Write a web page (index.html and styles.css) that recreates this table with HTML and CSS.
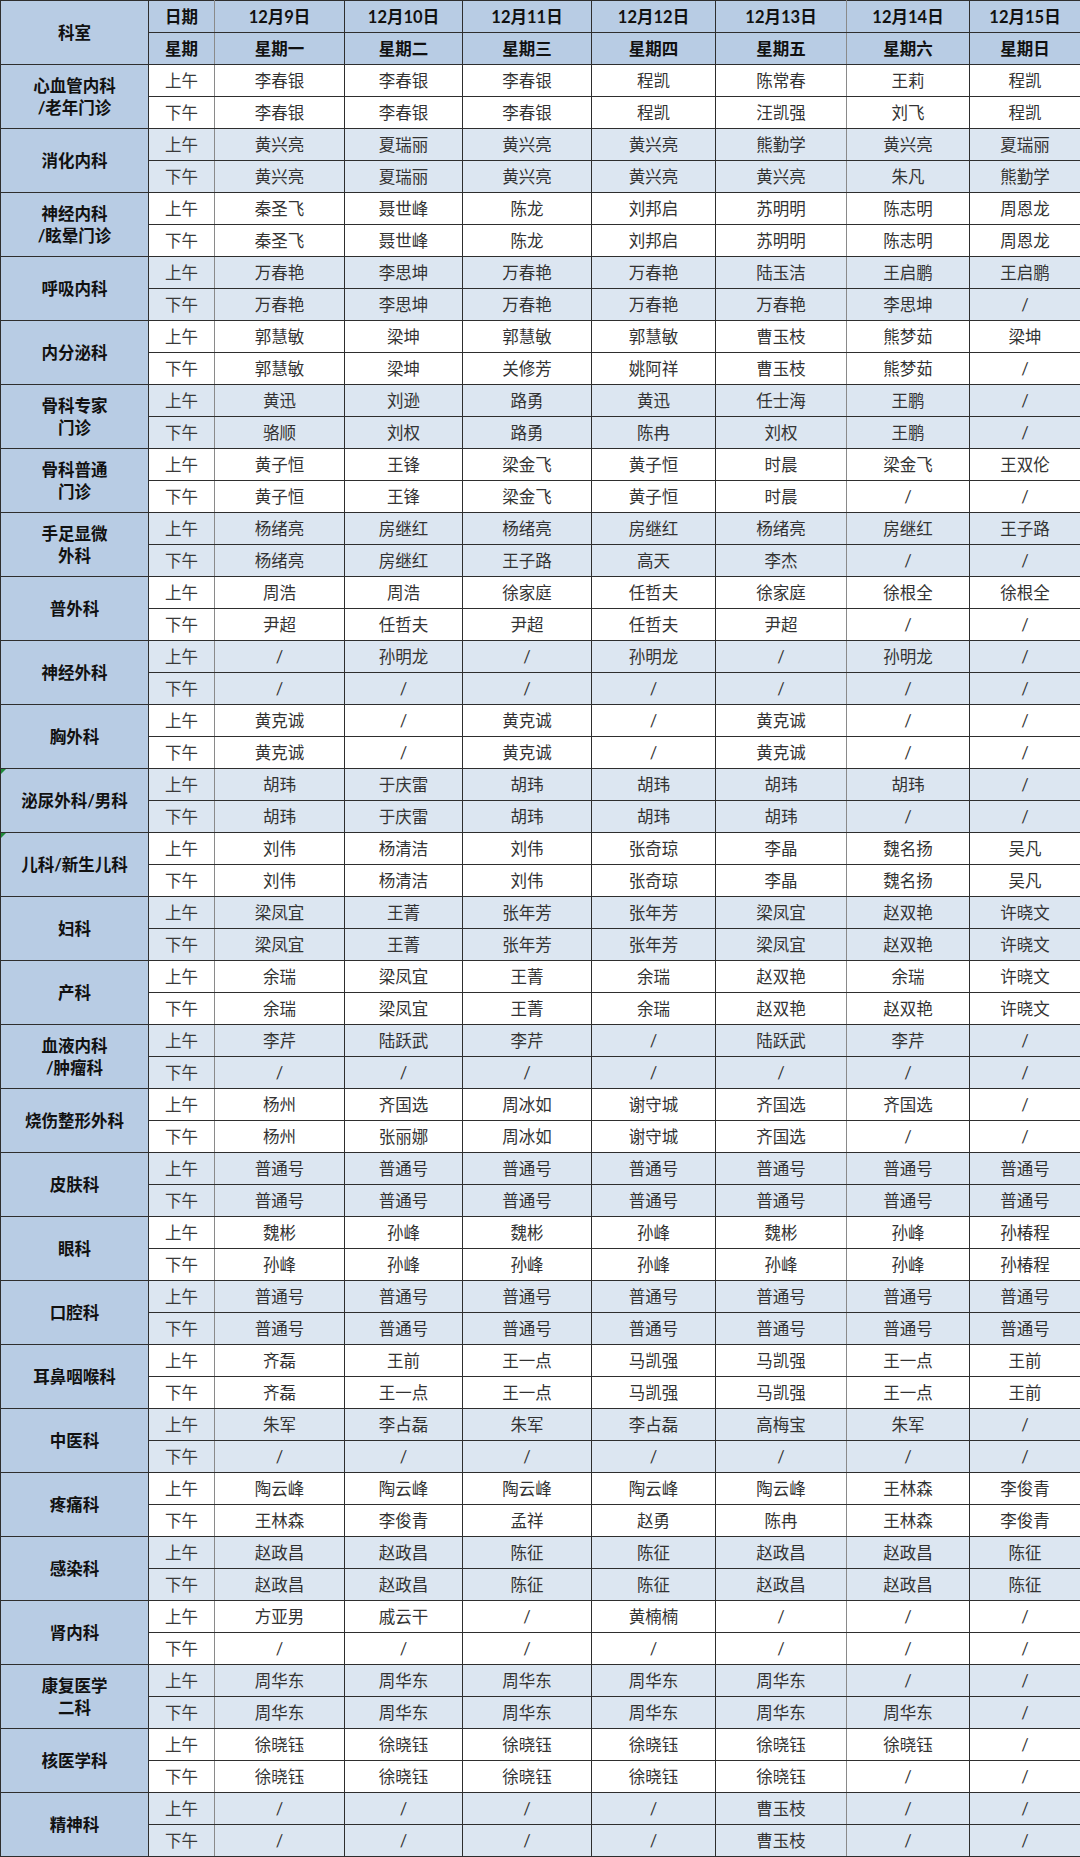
FILE: index.html
```html
<!DOCTYPE html>
<html lang="zh-CN">
<head>
<meta charset="utf-8">
<title>门诊排班表</title>
<link rel="stylesheet" href="styles.css">
</head>
<body>
<table class="sched">
<colgroup>
<col class="c-dept"><col class="c-time"><col class="c-d1"><col class="c-d2"><col class="c-d3"><col class="c-d4"><col class="c-d5"><col class="c-d6"><col class="c-d7">
</colgroup>
<thead>
<tr><th class="hd" rowspan="2">科室</th><th class="hd">日期</th><th class="hd">12月9日</th><th class="hd">12月10日</th><th class="hd">12月11日</th><th class="hd">12月12日</th><th class="hd">12月13日</th><th class="hd">12月14日</th><th class="hd">12月15日</th></tr>
<tr><th class="hd">星期</th><th class="hd">星期一</th><th class="hd">星期二</th><th class="hd">星期三</th><th class="hd">星期四</th><th class="hd">星期五</th><th class="hd">星期六</th><th class="hd">星期日</th></tr>
</thead>
<tbody>
<tr class="w"><th class="dept" rowspan="2">心血管内科<br>/老年门诊</th><td class="t">上午</td><td>李春银</td><td>李春银</td><td>李春银</td><td>程凯</td><td>陈常春</td><td>王莉</td><td>程凯</td></tr>
<tr class="w"><td class="t">下午</td><td>李春银</td><td>李春银</td><td>李春银</td><td>程凯</td><td>汪凯强</td><td>刘飞</td><td>程凯</td></tr>
<tr class="b"><th class="dept" rowspan="2">消化内科</th><td class="t">上午</td><td>黄兴亮</td><td>夏瑞丽</td><td>黄兴亮</td><td>黄兴亮</td><td>熊勤学</td><td>黄兴亮</td><td>夏瑞丽</td></tr>
<tr class="b"><td class="t">下午</td><td>黄兴亮</td><td>夏瑞丽</td><td>黄兴亮</td><td>黄兴亮</td><td>黄兴亮</td><td>朱凡</td><td>熊勤学</td></tr>
<tr class="w"><th class="dept" rowspan="2">神经内科<br>/眩晕门诊</th><td class="t">上午</td><td>秦圣飞</td><td>聂世峰</td><td>陈龙</td><td>刘邦启</td><td>苏明明</td><td>陈志明</td><td>周恩龙</td></tr>
<tr class="w"><td class="t">下午</td><td>秦圣飞</td><td>聂世峰</td><td>陈龙</td><td>刘邦启</td><td>苏明明</td><td>陈志明</td><td>周恩龙</td></tr>
<tr class="b"><th class="dept" rowspan="2">呼吸内科</th><td class="t">上午</td><td>万春艳</td><td>李思坤</td><td>万春艳</td><td>万春艳</td><td>陆玉洁</td><td>王启鹏</td><td>王启鹏</td></tr>
<tr class="b"><td class="t">下午</td><td>万春艳</td><td>李思坤</td><td>万春艳</td><td>万春艳</td><td>万春艳</td><td>李思坤</td><td>/</td></tr>
<tr class="w"><th class="dept" rowspan="2">内分泌科</th><td class="t">上午</td><td>郭慧敏</td><td>梁坤</td><td>郭慧敏</td><td>郭慧敏</td><td>曹玉枝</td><td>熊梦茹</td><td>梁坤</td></tr>
<tr class="w"><td class="t">下午</td><td>郭慧敏</td><td>梁坤</td><td>关修芳</td><td>姚阿祥</td><td>曹玉枝</td><td>熊梦茹</td><td>/</td></tr>
<tr class="b"><th class="dept" rowspan="2">骨科专家<br>门诊</th><td class="t">上午</td><td>黄迅</td><td>刘逊</td><td>路勇</td><td>黄迅</td><td>任士海</td><td>王鹏</td><td>/</td></tr>
<tr class="b"><td class="t">下午</td><td>骆顺</td><td>刘权</td><td>路勇</td><td>陈冉</td><td>刘权</td><td>王鹏</td><td>/</td></tr>
<tr class="w"><th class="dept" rowspan="2">骨科普通<br>门诊</th><td class="t">上午</td><td>黄子恒</td><td>王锋</td><td>梁金飞</td><td>黄子恒</td><td>时晨</td><td>梁金飞</td><td>王双伦</td></tr>
<tr class="w"><td class="t">下午</td><td>黄子恒</td><td>王锋</td><td>梁金飞</td><td>黄子恒</td><td>时晨</td><td>/</td><td>/</td></tr>
<tr class="b"><th class="dept" rowspan="2">手足显微<br>外科</th><td class="t">上午</td><td>杨绪亮</td><td>房继红</td><td>杨绪亮</td><td>房继红</td><td>杨绪亮</td><td>房继红</td><td>王子路</td></tr>
<tr class="b"><td class="t">下午</td><td>杨绪亮</td><td>房继红</td><td>王子路</td><td>高天</td><td>李杰</td><td>/</td><td>/</td></tr>
<tr class="w"><th class="dept" rowspan="2">普外科</th><td class="t">上午</td><td>周浩</td><td>周浩</td><td>徐家庭</td><td>任哲夫</td><td>徐家庭</td><td>徐根全</td><td>徐根全</td></tr>
<tr class="w"><td class="t">下午</td><td>尹超</td><td>任哲夫</td><td>尹超</td><td>任哲夫</td><td>尹超</td><td>/</td><td>/</td></tr>
<tr class="b"><th class="dept" rowspan="2">神经外科</th><td class="t">上午</td><td>/</td><td>孙明龙</td><td>/</td><td>孙明龙</td><td>/</td><td>孙明龙</td><td>/</td></tr>
<tr class="b"><td class="t">下午</td><td>/</td><td>/</td><td>/</td><td>/</td><td>/</td><td>/</td><td>/</td></tr>
<tr class="w"><th class="dept" rowspan="2">胸外科</th><td class="t">上午</td><td>黄克诚</td><td>/</td><td>黄克诚</td><td>/</td><td>黄克诚</td><td>/</td><td>/</td></tr>
<tr class="w"><td class="t">下午</td><td>黄克诚</td><td>/</td><td>黄克诚</td><td>/</td><td>黄克诚</td><td>/</td><td>/</td></tr>
<tr class="b"><th class="dept flag" rowspan="2">泌尿外科/男科</th><td class="t">上午</td><td>胡玮</td><td>于庆雷</td><td>胡玮</td><td>胡玮</td><td>胡玮</td><td>胡玮</td><td>/</td></tr>
<tr class="b"><td class="t">下午</td><td>胡玮</td><td>于庆雷</td><td>胡玮</td><td>胡玮</td><td>胡玮</td><td>/</td><td>/</td></tr>
<tr class="w"><th class="dept flag" rowspan="2">儿科/新生儿科</th><td class="t">上午</td><td>刘伟</td><td>杨清洁</td><td>刘伟</td><td>张奇琼</td><td>李晶</td><td>魏名扬</td><td>吴凡</td></tr>
<tr class="w"><td class="t">下午</td><td>刘伟</td><td>杨清洁</td><td>刘伟</td><td>张奇琼</td><td>李晶</td><td>魏名扬</td><td>吴凡</td></tr>
<tr class="b"><th class="dept" rowspan="2">妇科</th><td class="t">上午</td><td>梁凤宜</td><td>王菁</td><td>张年芳</td><td>张年芳</td><td>梁凤宜</td><td>赵双艳</td><td>许晓文</td></tr>
<tr class="b"><td class="t">下午</td><td>梁凤宜</td><td>王菁</td><td>张年芳</td><td>张年芳</td><td>梁凤宜</td><td>赵双艳</td><td>许晓文</td></tr>
<tr class="w"><th class="dept" rowspan="2">产科</th><td class="t">上午</td><td>余瑞</td><td>梁凤宜</td><td>王菁</td><td>余瑞</td><td>赵双艳</td><td>余瑞</td><td>许晓文</td></tr>
<tr class="w"><td class="t">下午</td><td>余瑞</td><td>梁凤宜</td><td>王菁</td><td>余瑞</td><td>赵双艳</td><td>赵双艳</td><td>许晓文</td></tr>
<tr class="b"><th class="dept" rowspan="2">血液内科<br>/肿瘤科</th><td class="t">上午</td><td>李芹</td><td>陆跃武</td><td>李芹</td><td>/</td><td>陆跃武</td><td>李芹</td><td>/</td></tr>
<tr class="b"><td class="t">下午</td><td>/</td><td>/</td><td>/</td><td>/</td><td>/</td><td>/</td><td>/</td></tr>
<tr class="w"><th class="dept" rowspan="2">烧伤整形外科</th><td class="t">上午</td><td>杨州</td><td>齐国选</td><td>周冰如</td><td>谢守城</td><td>齐国选</td><td>齐国选</td><td>/</td></tr>
<tr class="w"><td class="t">下午</td><td>杨州</td><td>张丽娜</td><td>周冰如</td><td>谢守城</td><td>齐国选</td><td>/</td><td>/</td></tr>
<tr class="b"><th class="dept" rowspan="2">皮肤科</th><td class="t">上午</td><td>普通号</td><td>普通号</td><td>普通号</td><td>普通号</td><td>普通号</td><td>普通号</td><td>普通号</td></tr>
<tr class="b"><td class="t">下午</td><td>普通号</td><td>普通号</td><td>普通号</td><td>普通号</td><td>普通号</td><td>普通号</td><td>普通号</td></tr>
<tr class="w"><th class="dept" rowspan="2">眼科</th><td class="t">上午</td><td>魏彬</td><td>孙峰</td><td>魏彬</td><td>孙峰</td><td>魏彬</td><td>孙峰</td><td>孙椿程</td></tr>
<tr class="w"><td class="t">下午</td><td>孙峰</td><td>孙峰</td><td>孙峰</td><td>孙峰</td><td>孙峰</td><td>孙峰</td><td>孙椿程</td></tr>
<tr class="b"><th class="dept" rowspan="2">口腔科</th><td class="t">上午</td><td>普通号</td><td>普通号</td><td>普通号</td><td>普通号</td><td>普通号</td><td>普通号</td><td>普通号</td></tr>
<tr class="b"><td class="t">下午</td><td>普通号</td><td>普通号</td><td>普通号</td><td>普通号</td><td>普通号</td><td>普通号</td><td>普通号</td></tr>
<tr class="w"><th class="dept" rowspan="2">耳鼻咽喉科</th><td class="t">上午</td><td>齐磊</td><td>王前</td><td>王一点</td><td>马凯强</td><td>马凯强</td><td>王一点</td><td>王前</td></tr>
<tr class="w"><td class="t">下午</td><td>齐磊</td><td>王一点</td><td>王一点</td><td>马凯强</td><td>马凯强</td><td>王一点</td><td>王前</td></tr>
<tr class="b"><th class="dept" rowspan="2">中医科</th><td class="t">上午</td><td>朱军</td><td>李占磊</td><td>朱军</td><td>李占磊</td><td>高梅宝</td><td>朱军</td><td>/</td></tr>
<tr class="b"><td class="t">下午</td><td>/</td><td>/</td><td>/</td><td>/</td><td>/</td><td>/</td><td>/</td></tr>
<tr class="w"><th class="dept" rowspan="2">疼痛科</th><td class="t">上午</td><td>陶云峰</td><td>陶云峰</td><td>陶云峰</td><td>陶云峰</td><td>陶云峰</td><td>王林森</td><td>李俊青</td></tr>
<tr class="w"><td class="t">下午</td><td>王林森</td><td>李俊青</td><td>孟祥</td><td>赵勇</td><td>陈冉</td><td>王林森</td><td>李俊青</td></tr>
<tr class="b"><th class="dept" rowspan="2">感染科</th><td class="t">上午</td><td>赵政昌</td><td>赵政昌</td><td>陈征</td><td>陈征</td><td>赵政昌</td><td>赵政昌</td><td>陈征</td></tr>
<tr class="b"><td class="t">下午</td><td>赵政昌</td><td>赵政昌</td><td>陈征</td><td>陈征</td><td>赵政昌</td><td>赵政昌</td><td>陈征</td></tr>
<tr class="w"><th class="dept" rowspan="2">肾内科</th><td class="t">上午</td><td>方亚男</td><td>戚云干</td><td>/</td><td>黄楠楠</td><td>/</td><td>/</td><td>/</td></tr>
<tr class="w"><td class="t">下午</td><td>/</td><td>/</td><td>/</td><td>/</td><td>/</td><td>/</td><td>/</td></tr>
<tr class="b"><th class="dept" rowspan="2">康复医学<br>二科</th><td class="t">上午</td><td>周华东</td><td>周华东</td><td>周华东</td><td>周华东</td><td>周华东</td><td>/</td><td>/</td></tr>
<tr class="b"><td class="t">下午</td><td>周华东</td><td>周华东</td><td>周华东</td><td>周华东</td><td>周华东</td><td>周华东</td><td>/</td></tr>
<tr class="w"><th class="dept" rowspan="2">核医学科</th><td class="t">上午</td><td>徐晓钰</td><td>徐晓钰</td><td>徐晓钰</td><td>徐晓钰</td><td>徐晓钰</td><td>徐晓钰</td><td>/</td></tr>
<tr class="w"><td class="t">下午</td><td>徐晓钰</td><td>徐晓钰</td><td>徐晓钰</td><td>徐晓钰</td><td>徐晓钰</td><td>/</td><td>/</td></tr>
<tr class="b"><th class="dept" rowspan="2">精神科</th><td class="t">上午</td><td>/</td><td>/</td><td>/</td><td>/</td><td>曹玉枝</td><td>/</td><td>/</td></tr>
<tr class="b"><td class="t">下午</td><td>/</td><td>/</td><td>/</td><td>/</td><td>曹玉枝</td><td>/</td><td>/</td></tr>
</tbody>
</table>
</body>
</html>
```
FILE: styles.css
```css
html, body {
  margin: 0;
  padding: 0;
  background: #ffffff;
}

.sched {
  border-collapse: collapse;
  table-layout: fixed;
  width: 1080px;
  font-family: "Lato", "Noto Sans CJK SC", sans-serif;
  font-size: 16.5px;
  color: #333333;
}

.c-dept { width: 148px; }
.c-time { width: 66px; }
.c-d1 { width: 130px; }
.c-d2 { width: 118px; }
.c-d3 { width: 129px; }
.c-d4 { width: 124px; }
.c-d5 { width: 131px; }
.c-d6 { width: 123px; }
.c-d7 { width: 111px; }

.sched th,
.sched td {
  border: 1px solid #2e2e2e;
  height: 31px;
  padding: 0;
  text-align: center;
  vertical-align: middle;
  line-height: 22px;
  white-space: nowrap;
}

/* grey separators after the time column and after the 12月13日 column */
.sched tr > :nth-last-child(8),
.sched tr > :nth-last-child(3) {
  border-right-color: #8a8a8a;
}

.sched th.hd {
  background: #b8cce4;
  color: #111111;
  font-weight: 700;
}

.sched th.dept {
  background: #b8cce4;
  color: #111111;
  font-weight: 700;
  position: relative;
}

.sched th.flag::before {
  content: "";
  position: absolute;
  left: 0;
  top: 0;
  border-top: 5px solid #1e8a3a;
  border-right: 5px solid transparent;
}

.sched tr.w td {
  background: #ffffff;
}

.sched tr.b td {
  background: #dce6f1;
}

.sched td.t {
  color: #3a3a3a;
}
```
